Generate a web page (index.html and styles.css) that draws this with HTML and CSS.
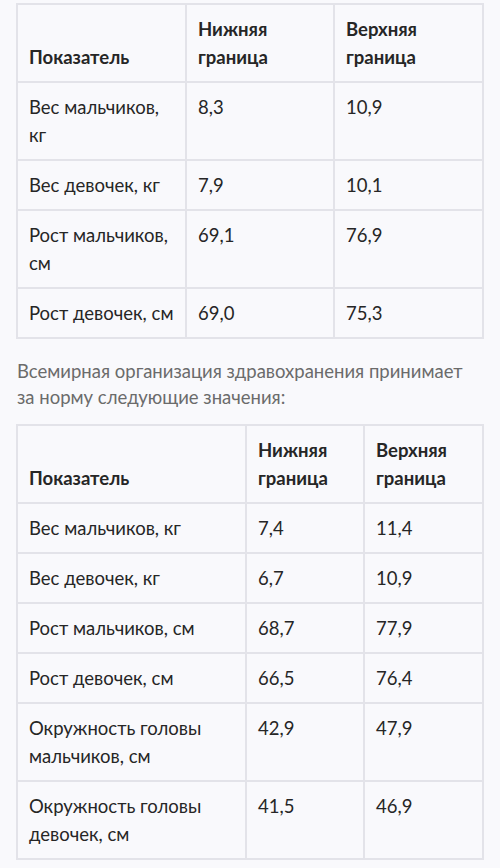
FILE: index.html
```html
<!doctype html>
<html lang="ru">

<head>
    <meta charset="utf-8">
    <meta name="viewport" content="width=device-width, initial-scale=1">
    <title>Нормы роста и веса</title>

    <link rel="stylesheet" href="styles.css">

</head>

<body>
    <div class="article">
        <table class="norms norms-first">
            <colgroup>
                <col class="col-name">
                <col class="col-low">
                <col class="col-high">
            </colgroup>
            <thead>
                <tr>
                    <th>Показатель</th>
                    <th>Нижняя граница</th>
                    <th>Верхняя граница</th>
                </tr>
            </thead>
            <tbody>
                <tr>
                    <td>Вес мальчиков, кг</td>
                    <td>8,3</td>
                    <td>10,9</td>
                </tr>
                <tr>
                    <td>Вес девочек, кг</td>
                    <td>7,9</td>
                    <td>10,1</td>
                </tr>
                <tr>
                    <td>Рост мальчиков, см</td>
                    <td>69,1</td>
                    <td>76,9</td>
                </tr>
                <tr>
                    <td>Рост девочек, см</td>
                    <td>69,0</td>
                    <td>75,3</td>
                </tr>
            </tbody>
        </table>

        <p class="note">Всемирная организация здравохранения принимает за норму следующие значения:</p>

        <table class="norms norms-who">
            <colgroup>
                <col class="col-name">
                <col class="col-low">
                <col class="col-high">
            </colgroup>
            <thead>
                <tr>
                    <th>Показатель</th>
                    <th>Нижняя граница</th>
                    <th>Верхняя граница</th>
                </tr>
            </thead>
            <tbody>
                <tr>
                    <td>Вес мальчиков, кг</td>
                    <td>7,4</td>
                    <td>11,4</td>
                </tr>
                <tr>
                    <td>Вес девочек, кг</td>
                    <td>6,7</td>
                    <td>10,9</td>
                </tr>
                <tr>
                    <td>Рост мальчиков, см</td>
                    <td>68,7</td>
                    <td>77,9</td>
                </tr>
                <tr>
                    <td>Рост девочек, см</td>
                    <td>66,5</td>
                    <td>76,4</td>
                </tr>
                <tr>
                    <td>Окружность головы мальчиков, см</td>
                    <td>42,9</td>
                    <td>47,9</td>
                </tr>
                <tr>
                    <td>Окружность головы девочек, см</td>
                    <td>41,5</td>
                    <td>46,9</td>
                </tr>
            </tbody>
        </table>
    </div>
</body>

</html>
```

FILE: styles.css
```css
body {
    margin: 0;
    background-color: #f9f9fc;
    color: #262626;
    font-family: Lato, "Open Sans", sans-serif;
    font-size: 18.5px;
}

.article {
    padding: 3px 16px 0 16px;
}

.norms {
    width: 468px;
    border-collapse: collapse;
    table-layout: fixed;
    line-height: 28px;
}

.norms th,
.norms td {
    border: 2px solid #e3e3e9;
    padding: 10px 11px;
    text-align: left;
}

.norms th {
    font-weight: bold;
    vertical-align: bottom;
}

.norms td {
    vertical-align: top;
}

.norms-first .col-name {
    width: 169px;
}

.norms-first .col-low {
    width: 148px;
}

.norms-who .col-name {
    width: 229px;
}

.norms-who .col-low {
    width: 118px;
}

.note {
    margin: 19px 0 14px 1px;
    color: #6b6b6b;
    line-height: 26px;
}
```
